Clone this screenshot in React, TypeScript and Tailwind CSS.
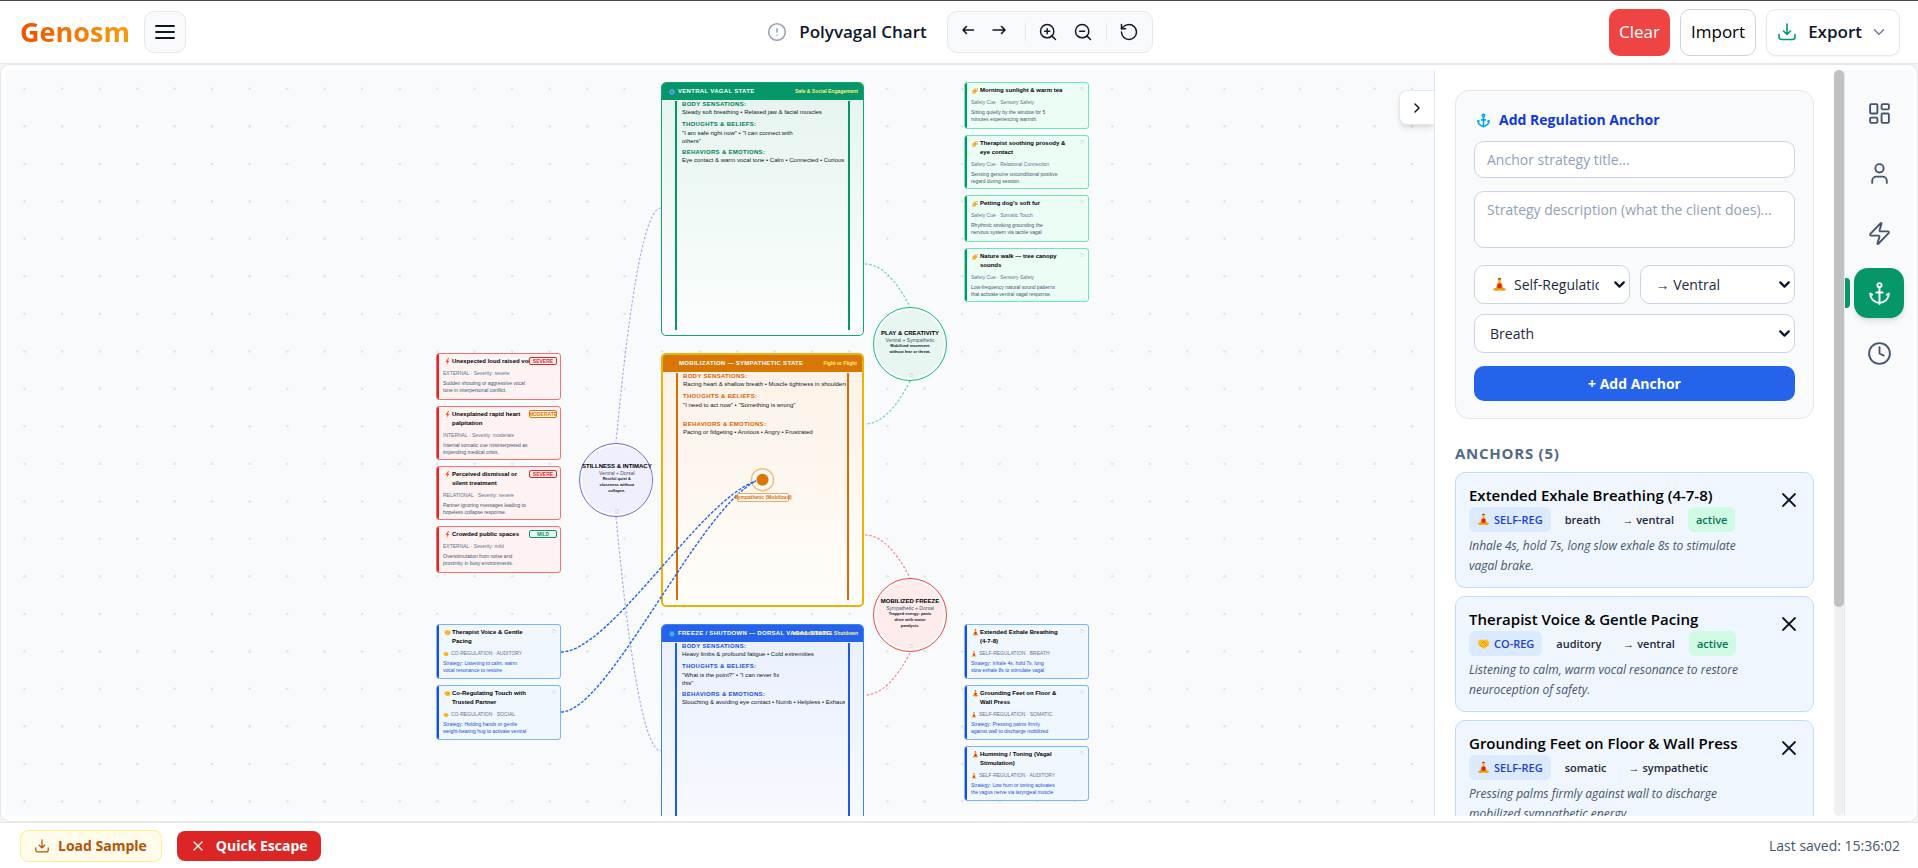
import type { ReactNode } from "react";
import {
  Anchor,
  ChevronDown,
  ChevronRight,
  CircleAlert,
  Clock,
  File,
  LayoutDashboard,
  RotateCcw,
  Shield,
  Snowflake,
  Sparkles,
  User,
  X,
  Zap,
  ZoomIn,
  ZoomOut,
} from "lucide-react";

type IconProps = { className?: string };

const LotusIcon = ({ className }: IconProps) => (
  <svg viewBox="0 0 16 16" className={className} aria-hidden="true">
    <circle cx="8" cy="3.2" r="2" fill="#fbbf24" />
    <path d="M6.2 2.6a1.8 1.8 0 0 1 3.6 0z" fill="#7c4a1e" />
    <path d="M8 4.8 5.2 7.4 4.4 12h7.2l-.8-4.6z" fill="#f97316" />
    <path d="M1 13.2c2-2 5-2.6 7-1.6 2-1 5-.4 7 1.6-1.8 2-4.8 1.8-7 .8-2.2 1-5.2 1.2-7-.8z" fill="#f59e0b" />
    <path d="M6.4 7.5h3.2l.5 4.5H5.900z" fill="#dc2626" />
  </svg>
);

const HandshakeIcon = ({ className }: IconProps) => (
  <svg viewBox="0 0 16 16" className={className} aria-hidden="true">
    <path d="M1 6 3.500 3 8 3.600 12.500 3 15 6l-.6 4L10 14H7.500L1.800 10z" fill="#fbbf24" />
    <path d="M5 8.5 8 5.5l2 1.5 3 3M4 10l2.5 2.5M9 9l2 2M7.5 10.5 9 12" fill="none" stroke="#d97706" strokeWidth="0.8" />
  </svg>
);

const BoltIcon = ({ className }: IconProps) => (
  <svg viewBox="0 0 16 16" className={className} aria-hidden="true">
    <path d="M9.500 0 3.500 9H7.500L5.500 16 12.500 6.200H8.600L11.500 0z" fill="#f0561d" />
  </svg>
);

const DownloadIcon = ({ className }: IconProps) => (
  <svg viewBox="0 0 18 18" className={className} fill="none" stroke="currentColor" strokeWidth="1.6" strokeLinecap="round" strokeLinejoin="round" aria-hidden="true">
    <path d="M9 1v10.5M5.500 8 9 11.500 12.500 8M1 11.500V14a2.500 2.500 0 0 0 2.500 2.500h11A2.500 2.500 0 0 0 17 14v-2.500" />
  </svg>
);

const ArrowIcon = ({ className, flip }: IconProps & { flip?: boolean }) => (
  <svg viewBox="0 0 14 10" className={className} fill="none" stroke="currentColor" strokeWidth="1.6" strokeLinecap="round" strokeLinejoin="round" aria-hidden="true">
    <path d={flip ? "M1 5h12M9.500 1.500 13 5 9.500 8.500" : "M12.500 5H2M5.500 1.500 2 5l3.500 3.500"} />
  </svg>
);

const Header = () => (
  <header className="grid h-[64px] shrink-0 grid-cols-[1fr_auto_1fr] items-center border-t border-b border-t-[#4a4552] border-b-gray-200 bg-white pr-[18px] pl-5">
    <div className="flex items-center gap-[14px]">
      <span className="bg-gradient-to-r from-[#f04e00] to-[#f59e0b] bg-clip-text text-[27px] leading-9 font-bold text-transparent">Genosm</span>
      <button aria-label="Menu" className="flex size-[42px] items-center justify-center rounded-[10px] border border-gray-200 bg-gray-50 text-slate-900">
        <svg viewBox="0 0 20 16" className="h-4 w-5" stroke="currentColor" strokeWidth="1.8" strokeLinecap="round">
          <path d="M1 2h18M1 8h18M1 14h18" />
        </svg>
      </button>
    </div>

    <div className="flex items-center gap-5">
      <div className="flex items-center gap-3">
        <CircleAlert className="size-5 text-slate-400" strokeWidth={1.8} />
        <h1 className="text-[17px] leading-6 font-semibold text-slate-900">Polyvagal Chart</h1>
      </div>
      <div className="flex h-[42px] items-center rounded-[10px] border border-gray-200 bg-gray-50 px-[5px] text-slate-900">
        <button aria-label="Undo" className="flex h-8 w-[31px] items-center justify-center pb-1">
          <ArrowIcon className="h-[10px] w-[14px]" />
        </button>
        <button aria-label="Redo" className="flex h-8 w-[31px] items-center justify-center pb-1">
          <ArrowIcon className="h-[10px] w-[14px]" flip />
        </button>
        <span className="mr-[5px] ml-[10px] h-[18px] w-px bg-gray-200" />
        <button aria-label="Zoom in" className="flex h-8 w-[35px] items-center justify-center">
          <ZoomIn className="size-5" strokeWidth={1.8} />
        </button>
        <button aria-label="Zoom out" className="flex h-8 w-[35px] items-center justify-center">
          <ZoomOut className="size-5" strokeWidth={1.8} />
        </button>
        <span className="mx-[5px] h-[18px] w-px bg-gray-200" />
        <button aria-label="Reset view" className="flex h-8 w-[35px] items-center justify-center">
          <RotateCcw className="size-5" strokeWidth={1.8} />
        </button>
      </div>
    </div>

    <div className="flex items-center justify-end gap-[10px] text-[17px] leading-6">
      <button className="h-[47px] rounded-[10px] bg-[#ef4444] px-[10px] font-medium text-white">Clear</button>
      <button className="h-[47px] rounded-[10px] border border-slate-300 bg-white px-[10px] font-medium text-black">Import</button>
      <button className="flex h-[47px] items-center rounded-[10px] border border-slate-200 bg-white px-[11px] font-semibold text-slate-900 shadow-xs">
        <DownloadIcon className="mr-3 size-[18px] text-[#059669]" />
        Export
        <ChevronDown className="ml-2 size-[18px] text-slate-500" strokeWidth={1.6} />
      </button>
    </div>
  </header>
);

const tones = {
  green: {
    card: "border-[#6ee7b7] bg-[#ecfdf5]",
    accent: "bg-[#059669]",
    desc: "text-slate-600",
    tall: "h-[54px]",
  },
  red: {
    card: "border-[#f87171] bg-[#fef2f2]",
    accent: "bg-[#dc2626]",
    desc: "text-slate-600",
    tall: "h-[54px]",
  },
  blue: {
    card: "border-[#7ab4fb] bg-[#f0f7ff]",
    accent: "bg-[#1d4ed8]",
    desc: "text-[#1d4ed8]",
    tall: "h-[55px]",
  },
};

const badges = {
  SEVERE: "border-[#dc2626] bg-[#fef2f2] text-[#dc2626]",
  MODERATE: "border-[#d97706] bg-[#fffbeb] text-[#d97706]",
  MILD: "border-[#059669] bg-[#ecfdf5] text-[#059669]",
};

type Note = {
  title: string[];
  meta: string;
  desc: string[];
  badge?: keyof typeof badges;
};

const cues: Note[] = [
  { title: ["Morning sunlight & warm tea"], meta: "Safety Cue · Sensory Safety", desc: ["Sitting quietly by the window for 5", "minutes experiencing warmth."] },
  { title: ["Therapist soothing prosody &", "eye contact"], meta: "Safety Cue · Relational Connection", desc: ["Sensing genuine unconditional positive", "regard during session."] },
  { title: ["Petting dog's soft fur"], meta: "Safety Cue · Somatic Touch", desc: ["Rhythmic stroking grounding the", "nervous system via tactile vagal"] },
  { title: ["Nature walk — tree canopy", "sounds"], meta: "Safety Cue · Sensory Safety", desc: ["Low-frequency natural sound patterns", "that activate ventral vagal response."] },
];

const triggers: Note[] = [
  { title: ["Unexpected loud raised voices"], meta: "EXTERNAL · Severity: severe", desc: ["Sudden shouting or aggressive vocal", "tone in interpersonal conflict."], badge: "SEVERE" },
  { title: ["Unexplained rapid heart", "palpitation"], meta: "INTERNAL · Severity: moderate", desc: ["Internal somatic cue misinterpreted as", "impending medical crisis."], badge: "MODERATE" },
  { title: ["Perceived dismissal or", "silent treatment"], meta: "RELATIONAL · Severity: severe", desc: ["Partner ignoring messages leading to", "hopeless collapse response."], badge: "SEVERE" },
  { title: ["Crowded public spaces"], meta: "EXTERNAL · Severity: mild", desc: ["Overstimulation from noise and", "proximity in busy environments."], badge: "MILD" },
];

const coAnchors: Note[] = [
  { title: ["Therapist Voice & Gentle", "Pacing"], meta: "CO-REGULATION · AUDITORY", desc: ["Strategy: Listening to calm, warm", "vocal resonance to restore"] },
  { title: ["Co-Regulating Touch with", "Trusted Partner"], meta: "CO-REGULATION · SOCIAL", desc: ["Strategy: Holding hands or gentle", "weight-bearing hug to activate ventral"] },
];

const selfAnchors: Note[] = [
  { title: ["Extended Exhale Breathing", "(4-7-8)"], meta: "SELF-REGULATION · BREATH", desc: ["Strategy: Inhale 4s, hold 7s, long", "slow exhale 8s to stimulate vagal"] },
  { title: ["Grounding Feet on Floor &", "Wall Press"], meta: "SELF-REGULATION · SOMATIC", desc: ["Strategy: Pressing palms firmly", "against wall to discharge mobilized"] },
  { title: ["Humming / Toning (Vagal", "Stimulation)"], meta: "SELF-REGULATION · AUDITORY", desc: ["Strategy: Low hum or toning activates", "the vagus nerve via laryngeal muscle"] },
];

const NoteStack = ({ notes, tone, icon, metaIcon, place }: { notes: Note[]; tone: keyof typeof tones; icon: ReactNode; metaIcon?: ReactNode; place: string }) => (
  <div className={`absolute flex w-[125px] flex-col gap-[6px] ${place}`}>
    {notes.map((note) => (
      <div
        key={note.meta + note.title[0]}
        className={`relative overflow-hidden rounded-[3px] border ${tones[tone].card} ${note.title.length > 1 ? tones[tone].tall : "h-[47px]"}`}
      >
        <div className={`absolute inset-y-0 left-0 w-[2px] ${tones[tone].accent}`} />
        <div className="flex items-start gap-[1px] pt-[3px] pl-[7px] text-[6px] leading-[9px] font-bold text-black">
          <span className="flex h-[9px] w-[7px] shrink-0 items-center">{icon}</span>
          <p className="whitespace-nowrap">
            {note.title.map((line) => (
              <span key={line} className="block">{line}</span>
            ))}
          </p>
        </div>
        <p className="mt-1 flex items-center gap-[2px] pl-[6px] text-[5px] leading-[7px] whitespace-nowrap text-slate-500">
          {metaIcon}
          {note.meta}
        </p>
        <p className={`mt-[3px] pl-[6px] text-[5px] leading-[7px] whitespace-nowrap ${tones[tone].desc}`}>
          {note.desc.map((line) => (
            <span key={line} className="block">{line}</span>
          ))}
        </p>
        {note.badge ? (
          <span className={`absolute top-[3px] right-[3px] flex h-2 w-[28px] items-center justify-center rounded-[2px] border text-[5px] leading-[6px] font-bold ${badges[note.badge]}`}>
            {note.badge}
          </span>
        ) : (
          <File className="absolute top-[4px] right-[4px] size-[4px] text-slate-400 opacity-60" />
        )}
      </div>
    ))}
  </div>
);

type Polyvagal = {
  name: string;
  label: string;
  icon: ReactNode;
  place: string;
  box: string;
  head: string;
  heading: string;
  rail: string;
  body: string;
  beliefs: string[];
  behaviors: string;
};

const states: Polyvagal[] = [
  {
    name: "VENTRAL VAGAL STATE",
    label: "Safe & Social Engagement",
    icon: <Shield className="size-[6px] fill-[#3b82f6] text-blue-200" />,
    place: "top-[12px]",
    box: "border border-[#10a574] from-[#e5f4ef] to-[#fbfefd]",
    head: "bg-[#059669]",
    heading: "text-[#047857]",
    rail: "bg-[#059669]",
    body: "Steady soft breathing • Relaxed jaw & facial muscles",
    beliefs: ["\"I am safe right now\" • \"I can connect with", "others\""],
    behaviors: "Eye contact & warm vocal tone • Calm • Connected • Curious",
  },
  {
    name: "MOBILIZATION — SYMPATHETIC STATE",
    label: "Fight or Flight",
    icon: <BoltIcon className="size-[5px]" />,
    place: "top-[283px]",
    box: "border-2 border-[#eab308] from-[#fcf1e6] to-[#fffdfa]",
    head: "bg-[#d97706]",
    heading: "text-[#d95f06]",
    rail: "bg-[#d96c06]",
    body: "Racing heart & shallow breath • Muscle tightness in shoulders",
    beliefs: ["\"I need to act now\" • \"Something is wrong\""],
    behaviors: "Pacing or fidgeting • Anxious • Angry • Frustrated",
  },
  {
    name: "FREEZE / SHUTDOWN — DORSAL VAGAL STATE",
    label: "Immobilization & Shutdown",
    icon: <Snowflake className="size-[6px] text-cyan-300" />,
    place: "top-[554px]",
    box: "border border-[#3b82f6] from-[#e9effd] to-[#fbfcff]",
    head: "bg-[#2563eb]",
    heading: "text-[#1d4ed8]",
    rail: "bg-[#1d5be0]",
    body: "Heavy limbs & profound fatigue • Cold extremities",
    beliefs: ["\"What is the point?\" • \"I can never fix", "this\""],
    behaviors: "Slouching & avoiding eye contact • Numb • Helpless • Exhausted",
  },
];

const StateBox = ({ state }: { state: Polyvagal }) => (
  <section className={`absolute left-[655px] h-[254px] w-[203px] overflow-hidden rounded-[5px] bg-gradient-to-b ${state.place} ${state.box}`}>
    <div className={`relative flex h-[17px] items-center gap-[3px] pl-[7px] text-[6px] font-bold tracking-wider whitespace-nowrap text-white ${state.head}`}>
      <span className="flex w-[6px] justify-center">{state.icon}</span>
      <h2>{state.name}</h2>
      <span className="absolute right-[5px] text-[5px] tracking-normal text-yellow-200">{state.label}</span>
    </div>
    <div className={`absolute top-[18px] bottom-[5px] left-[13px] w-[2px] ${state.rail}`} />
    <div className={`absolute top-[18px] right-[13px] bottom-[5px] w-[2px] ${state.rail}`} />
    <div className="ml-[20px] w-[163px] overflow-hidden text-[6px] leading-[8px] whitespace-nowrap text-slate-900">
      <h3 className={`font-bold tracking-wider ${state.heading}`}>BODY SENSATIONS:</h3>
      <p className="mb-1">{state.body}</p>
      <h3 className={`font-bold tracking-wider ${state.heading}`}>THOUGHTS &amp; BELIEFS:</h3>
      <p className="mb-[3px] h-[17px] pt-[1px]">
        {state.beliefs.map((line) => (
          <span key={line} className="block">{line}</span>
        ))}
      </p>
      <h3 className={`font-bold tracking-wider ${state.heading}`}>BEHAVIORS &amp; EMOTIONS:</h3>
      <p>{state.behaviors}</p>
    </div>
  </section>
);

const blends = [
  { name: "STILLNESS & INTIMACY", mix: "Ventral + Dorsal", desc: ["Restful quiet &", "closeness without", "collapse."], place: "left-[573px] top-[373px]", ring: "border-[#6366f1]", fill: "bg-[#efeffd]" },
  { name: "PLAY & CREATIVITY", mix: "Ventral + Sympathetic", desc: ["Mobilized movement", "without fear or threat."], place: "left-[867px] top-[237px]", ring: "border-[#10b981]", fill: "bg-[#e7f6f1]" },
  { name: "MOBILIZED FREEZE", mix: "Sympathetic + Dorsal", desc: ["Trapped energy: panic", "drive with motor", "paralysis."], place: "left-[867px] top-[508px]", ring: "border-[#ef4444]", fill: "bg-[#fdeceb]" },
];

const links = [
  { d: "M655 138 Q632 138 610 372", stroke: "#a9aef5" },
  { d: "M610 447 Q632 681 655 681", stroke: "#a9aef5" },
  { d: "M859 194 Q882 194 904 237", stroke: "#6ed3b0" },
  { d: "M904 311 Q882 354 859 354", stroke: "#6ed3b0" },
  { d: "M859 465 Q882 465 904 508", stroke: "#f58a8a" },
  { d: "M904 583 Q882 625 859 625", stroke: "#f58a8a" },
];

const Canvas = () => (
  <section aria-label="Chart canvas" className="relative min-w-0 flex-1 overflow-hidden bg-[#f8fafc] font-['Liberation_Sans',sans-serif]">
    <svg className="absolute inset-0 h-full w-full">
      <defs>
        <pattern id="dots" width="75" height="75" patternUnits="userSpaceOnUse">
          <g fill="#e0e6ee">
            <circle cx="18.7" cy="18.8" r="1.4" />
            <circle cx="56.2" cy="18.8" r="1.4" />
            <circle cx="18.7" cy="56.3" r="1.4" />
            <circle cx="56.2" cy="56.3" r="1.4" />
          </g>
        </pattern>
      </defs>
      <rect width="100%" height="100%" fill="url(#dots)" />
      {links.map((link) => (
        <path key={link.d} d={link.d} fill="none" stroke={link.stroke} strokeWidth="1.2" strokeDasharray="2.500 1.800" />
      ))}
    </svg>

    {states.map((state) => (
      <StateBox key={state.name} state={state} />
    ))}

    {blends.map((blend) => (
      <div key={blend.name} className={`absolute flex size-[74px] rounded-full border bg-white p-[2px] ${blend.place} ${blend.ring}`}>
        <div className={`flex flex-1 flex-col items-center justify-center rounded-full pb-1 text-center whitespace-nowrap ${blend.fill}`}>
          <h3 className="text-[6px] leading-[7px] font-bold text-black">{blend.name}</h3>
          <p className="text-[5px] leading-[6px] text-slate-600">{blend.mix}</p>
          {blend.desc.map((line) => (
            <p key={line} className="text-[4px] leading-[6px] font-bold text-slate-900">{line}</p>
          ))}
        </div>
        <File className="absolute bottom-[3px] left-[35px] size-[4px] text-slate-400 opacity-60" />
      </div>
    ))}

    <NoteStack notes={cues} tone="green" place="left-[958px] top-[12px]" icon={<Sparkles className="size-[6px] fill-[#f59e0b] text-[#f59e0b]" />} />
    <NoteStack notes={triggers} tone="red" place="left-[430px] top-[283px]" icon={<BoltIcon className="size-[7px]" />} />
    <NoteStack
      notes={coAnchors}
      tone="blue"
      place="left-[430px] top-[554px]"
      icon={<HandshakeIcon className="size-[7px]" />}
      metaIcon={<HandshakeIcon className="size-[6px]" />}
    />
    <NoteStack
      notes={selfAnchors}
      tone="blue"
      place="left-[958px] top-[554px]"
      icon={<LotusIcon className="size-[7px]" />}
      metaIcon={<LotusIcon className="size-[6px]" />}
    />

    <svg className="pointer-events-none absolute inset-0 h-full w-full" fill="none">
      <circle cx="756.5" cy="409.7" r="11" stroke="#f3bd85" strokeWidth="1.5" fill="#fffaf4" />
      <circle cx="756.5" cy="409.7" r="6" fill="#d97706" />
      <g stroke="#2563eb" strokeWidth="1.4" strokeDasharray="3 1.500">
        <path d="M555 582 C604 582 694 430 750 411" />
        <path d="M555 642 C602 642 692 440 750 411" />
      </g>
    </svg>
    <span className="absolute top-[423px] left-[731px] flex h-[9px] w-[52px] items-center justify-center rounded-[2px] border border-[#f0a860] bg-white/80 text-[5px] font-bold whitespace-nowrap text-[#d96c06]">
      Sympathetic (Mobilized)
    </span>

    <button aria-label="Collapse panel" className="absolute top-5 right-0 flex h-[35px] w-[35px] items-center justify-center rounded-l-lg border border-r-0 border-slate-200 bg-white text-slate-900 shadow-md">
      <ChevronRight className="size-4" strokeWidth={2.2} />
    </button>
  </section>
);

const fieldStyle = "w-full rounded-[10px] border border-slate-300 bg-white text-[14px] leading-5 text-slate-800";

const PanelSelect = ({ label, value, pad, icon }: { label: string; value: string; pad: string; icon?: ReactNode }) => (
  <div className="relative flex min-w-0 items-center">
    <select aria-label={label} defaultValue={value} className={`h-[39px] appearance-none pr-[30px] ${pad} ${fieldStyle}`}>
      <option>{value}</option>
    </select>
    {icon}
    <ChevronDown className="pointer-events-none absolute right-[2px] size-[17px] text-slate-900" strokeWidth={3.2} />
  </div>
);

const anchorList = [
  { title: "Extended Exhale Breathing (4-7-8)", kind: "SELF-REG", channel: "breath", target: "→ ventral", active: true, desc: "Inhale 4s, hold 7s, long slow exhale 8s to stimulate vagal brake." },
  { title: "Therapist Voice & Gentle Pacing", kind: "CO-REG", channel: "auditory", target: "→ ventral", active: true, desc: "Listening to calm, warm vocal resonance to restore neuroception of safety." },
  { title: "Grounding Feet on Floor & Wall Press", kind: "SELF-REG", channel: "somatic", target: "→ sympathetic", active: false, desc: "Pressing palms firmly against wall to discharge mobilized sympathetic energy." },
];

const Panel = () => (
  <aside className="flex w-[410px] shrink-0 overflow-hidden border-l border-slate-200 bg-white">
    <div className="min-w-0 flex-1 overflow-hidden p-5">
      <form className="flex flex-col rounded-[14px] border border-slate-200 bg-[#f8fafc] px-[18px] pt-[18px] pb-[17px]">
        <h2 className="mb-[10px] flex items-center gap-2 pl-[2px] text-[14px] leading-[22px] font-bold text-[#0f38dc]">
          <Anchor className="size-[15px] text-sky-500" strokeWidth={2.6} />
          Add Regulation Anchor
        </h2>
        <input aria-label="Anchor strategy title" placeholder="Anchor strategy title..." className={`mb-[13px] h-[37px] px-3 placeholder:text-slate-400 ${fieldStyle}`} />
        <textarea
          aria-label="Strategy description"
          placeholder="Strategy description (what the client does)..."
          className={`mb-[17px] h-[57px] resize-none px-3 pt-2 placeholder:text-slate-400 ${fieldStyle}`}
        />
        <div className="mb-[10px] grid grid-cols-2 gap-[10px]">
          <PanelSelect label="Regulation type" value="Self-Regulation" pad="pl-[39px]" icon={<LotusIcon className="pointer-events-none absolute left-[18px] size-[15px]" />} />
          <PanelSelect label="Target state" value="→ Ventral" pad="pl-[15px]" />
        </div>
        <PanelSelect label="Channel" value="Breath" pad="pl-[15px]" />
        <button type="button" className="mt-[13px] h-[35px] rounded-[10px] bg-[#2563eb] text-[14px] leading-5 font-bold text-white">
          + Add Anchor
        </button>
      </form>

      <h2 className="mt-6 mb-[7px] text-[15px] leading-[20px] font-bold tracking-wider text-[#526a85]">ANCHORS (5)</h2>
      <ul className="flex flex-col gap-2 pt-[2px]">
        {anchorList.map((anchor) => (
          <li key={anchor.title} className="flex items-start rounded-[10px] border border-[#bfdbfe] bg-[#eff6ff] pt-[11px] pr-3 pb-[11px] pl-[13px]">
            <div className="min-w-0 flex-1">
              <h3 className="text-[15px] leading-[22px] font-semibold text-black">{anchor.title}</h3>
              <div className="mt-[1px] flex gap-[6px] text-[11px] leading-[25px] font-semibold text-slate-800">
                <span className="flex items-center gap-1 rounded-md bg-[#dbeafe] px-2 text-[#1d3fd8]">
                  {anchor.kind === "CO-REG" ? <HandshakeIcon className="size-[13px]" /> : <LotusIcon className="size-[13px]" />}
                  {anchor.kind}
                </span>
                <span className="rounded-md bg-slate-100/50 px-2">{anchor.channel}</span>
                <span className="rounded-md bg-slate-100/50 px-2">{anchor.target}</span>
                {anchor.active && <span className="rounded-md bg-[#d1fae5] px-2 text-[#047857]">active</span>}
              </div>
              <p className="mt-1 pr-3 text-[12px] leading-5 text-slate-600 italic">{anchor.desc}</p>
            </div>
            <button aria-label={`Remove ${anchor.title}`} className="mt-1 text-slate-900">
              <X className="size-6" strokeWidth={1.8} />
            </button>
          </li>
        ))}
      </ul>
    </div>
    <div className="w-[10px] shrink-0 rounded-full bg-[#f0f0f0]">
      <div className="h-[72%] rounded-full bg-[#c1c1c1]" />
    </div>
  </aside>
);

const tools = [
  { icon: LayoutDashboard, label: "Overview" },
  { icon: User, label: "Client" },
  { icon: Zap, label: "Triggers" },
  { icon: Anchor, label: "Anchors", active: true },
  { icon: Clock, label: "History" },
];

const ToolRail = () => (
  <nav aria-label="Tools" className="flex w-[69px] shrink-0 flex-col gap-[10px] border-l border-slate-200 bg-[#f8fafc] pt-[18px]">
    {tools.map((tool) => (
      <div key={tool.label} className="relative flex justify-center">
        {tool.active && <span className="absolute top-[10px] left-0 h-[30px] w-[5px] rounded-r bg-[#059669]" />}
        <button
          aria-label={tool.label}
          className={`flex size-[50px] items-center justify-center rounded-[14px] ${tool.active ? "bg-[#059669] text-white shadow-md" : "text-slate-600"}`}
        >
          <tool.icon className="size-[25px]" strokeWidth={1.8} />
        </button>
      </div>
    ))}
  </nav>
);

const Footer = () => (
  <footer className="flex h-[46px] shrink-0 items-center gap-[15px] border-t border-gray-200 bg-white pr-[18px] pl-5 text-[14px] leading-5">
    <button className="flex h-[32px] items-center gap-[9px] rounded-lg border border-[#fef08a] bg-[#fffbeb] px-[14px] font-bold text-[#b45309]">
      <DownloadIcon className="size-[14px]" />
      Load Sample
    </button>
    <button className="flex h-[30px] items-center gap-[10px] rounded-lg bg-[#dc2626] px-[13px] font-bold text-white">
      <X className="size-4" strokeWidth={1.8} />
      Quick Escape
    </button>
    <span className="ml-auto text-slate-600">Last saved: 15:36:02</span>
  </footer>
);

export default function App() {
  return (
    <div className="flex h-screen flex-col bg-gray-100 font-['Open_Sans',sans-serif]">
      <Header />
      <main className="flex min-h-0 flex-1 rounded-[10px] border border-gray-200 bg-white p-[5px] pr-1">
        <Canvas />
        <Panel />
        <ToolRail />
      </main>
      <Footer />
    </div>
  );
}
